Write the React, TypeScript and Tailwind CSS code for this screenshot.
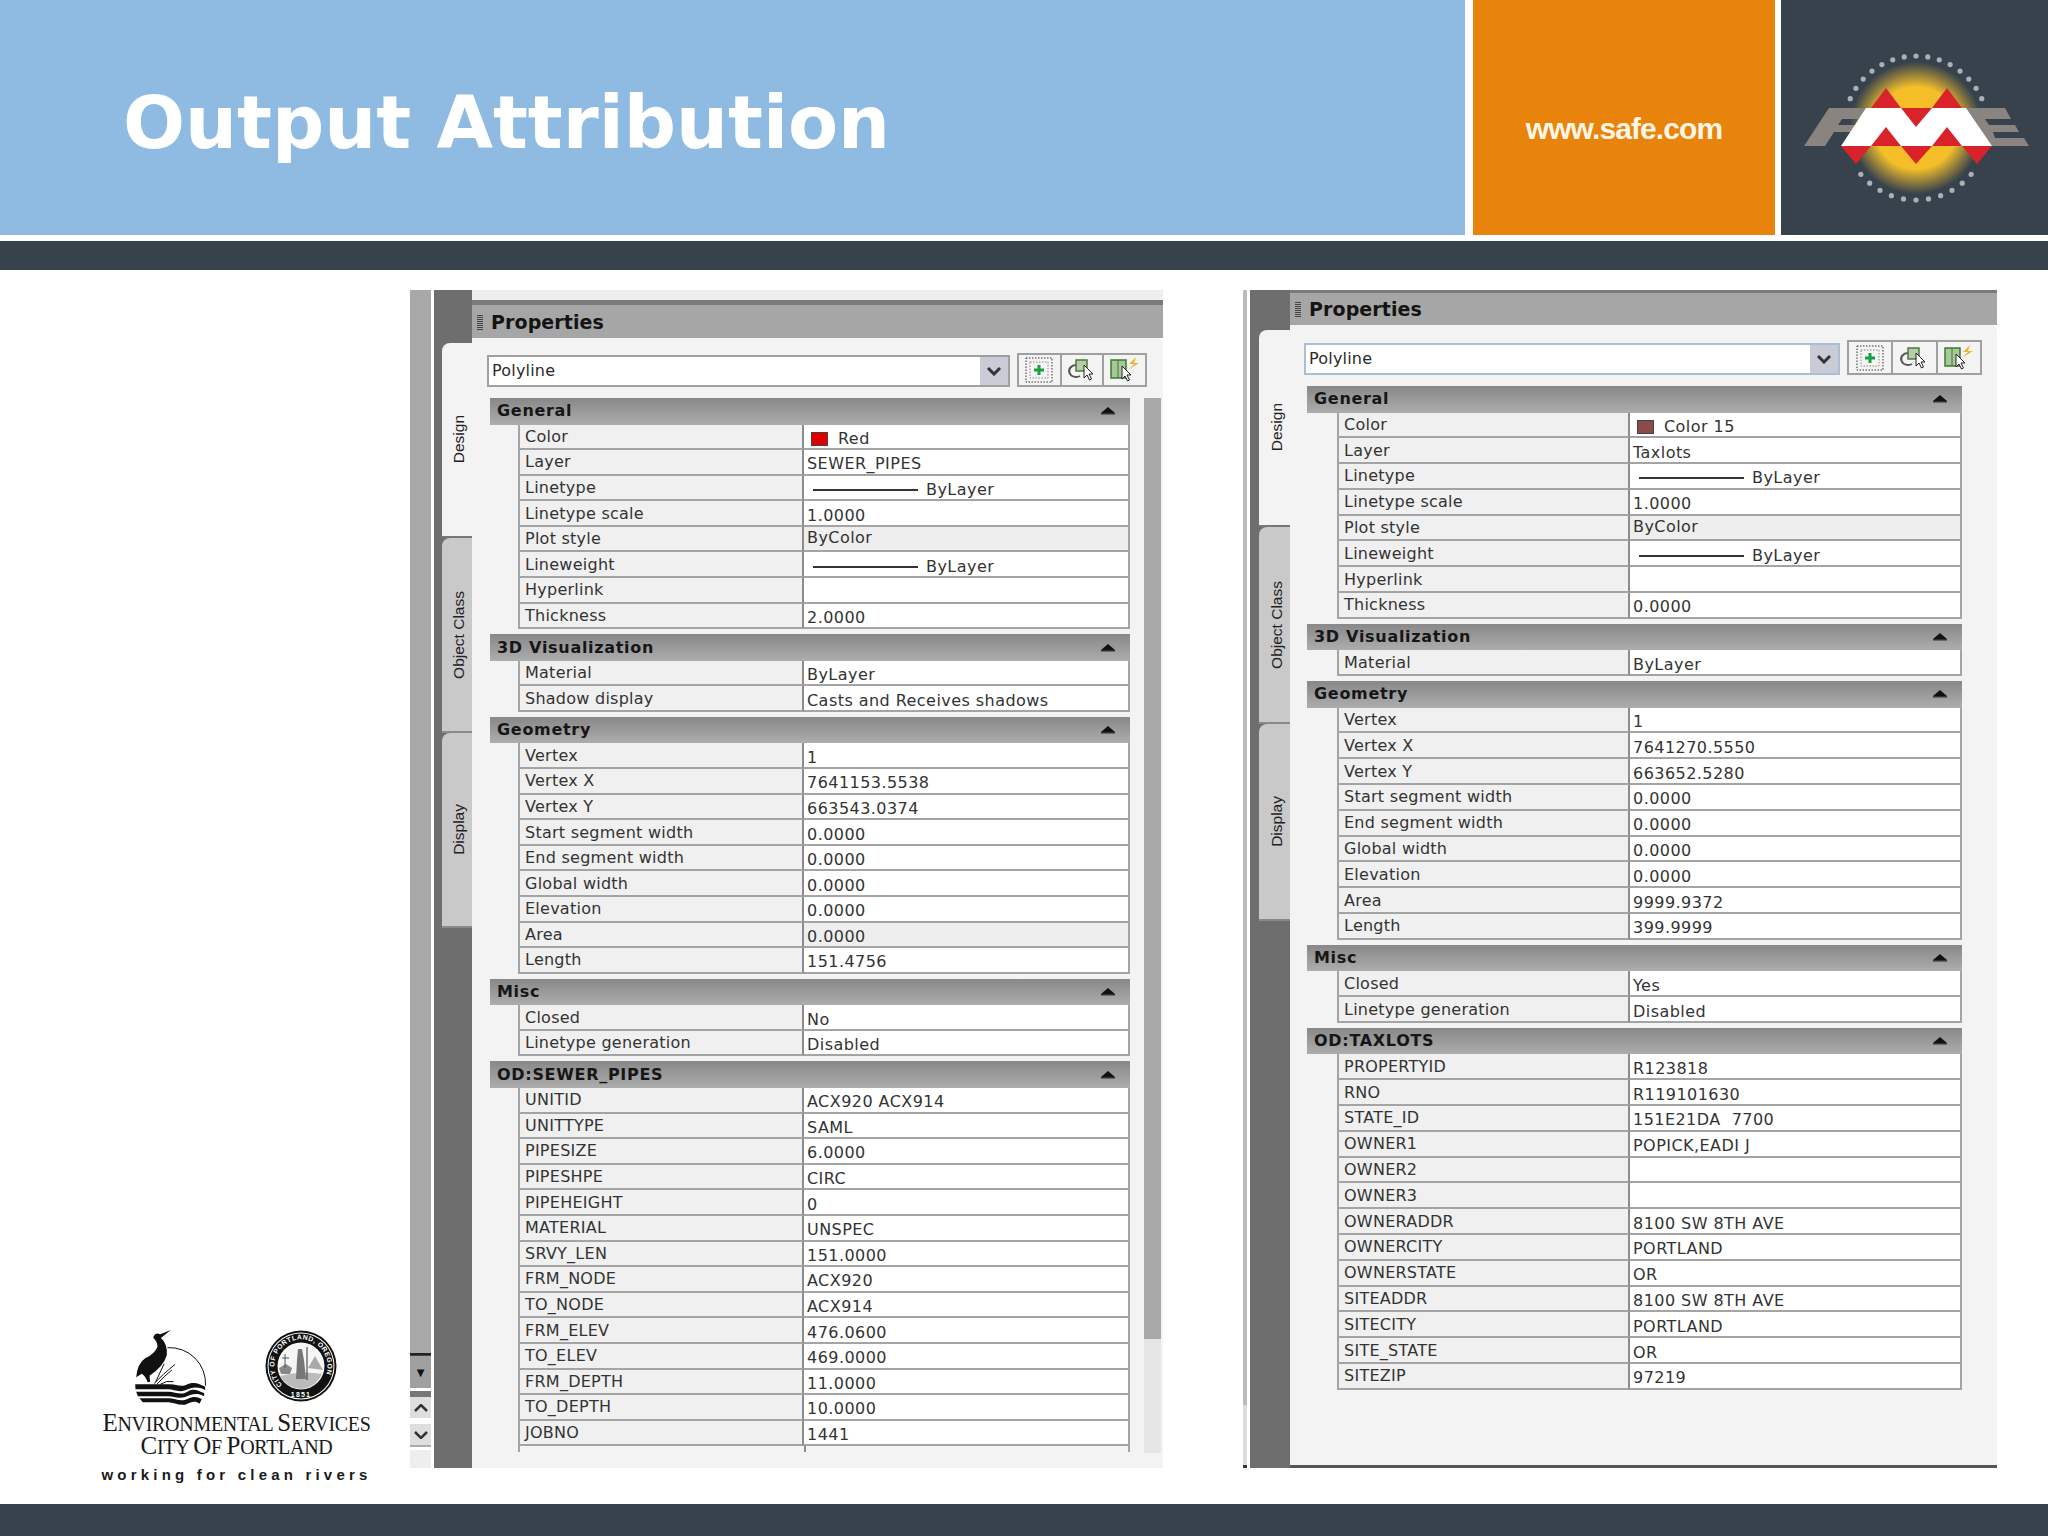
import React from "react";

type Row = {
  label: string;
  value?: string;
  swatch?: string;
  line?: boolean;
  high?: boolean;
  hover?: boolean;
};
type Section = { title: string; rows: Row[] };

const rows = (items: [string, string][]): Row[] =>
  items.map(([label, value]) => ({ label, value }));

const leftSections: Section[] = [
  {
    title: "General",
    rows: [
      { label: "Color", value: "Red", swatch: "bg-[#e00000]" },
      { label: "Layer", value: "SEWER_PIPES" },
      { label: "Linetype", value: "ByLayer", line: true },
      { label: "Linetype scale", value: "1.0000" },
      { label: "Plot style", value: "ByColor", high: true, hover: true },
      { label: "Lineweight", value: "ByLayer", line: true },
      { label: "Hyperlink", value: "" },
      { label: "Thickness", value: "2.0000" },
    ],
  },
  {
    title: "3D Visualization",
    rows: rows([
      ["Material", "ByLayer"],
      ["Shadow display", "Casts and Receives shadows"],
    ]),
  },
  {
    title: "Geometry",
    rows: [
      ...rows([
        ["Vertex", "1"],
        ["Vertex X", "7641153.5538"],
        ["Vertex Y", "663543.0374"],
        ["Start segment width", "0.0000"],
        ["End segment width", "0.0000"],
        ["Global width", "0.0000"],
        ["Elevation", "0.0000"],
      ]),
      { label: "Area", value: "0.0000", hover: true },
      { label: "Length", value: "151.4756" },
    ],
  },
  {
    title: "Misc",
    rows: rows([
      ["Closed", "No"],
      ["Linetype generation", "Disabled"],
    ]),
  },
  {
    title: "OD:SEWER_PIPES",
    rows: rows([
      ["UNITID", "ACX920 ACX914"],
      ["UNITTYPE", "SAML"],
      ["PIPESIZE", "6.0000"],
      ["PIPESHPE", "CIRC"],
      ["PIPEHEIGHT", "0"],
      ["MATERIAL", "UNSPEC"],
      ["SRVY_LEN", "151.0000"],
      ["FRM_NODE", "ACX920"],
      ["TO_NODE", "ACX914"],
      ["FRM_ELEV", "476.0600"],
      ["TO_ELEV", "469.0000"],
      ["FRM_DEPTH", "11.0000"],
      ["TO_DEPTH", "10.0000"],
      ["JOBNO", "1441"],
    ]),
  },
];

const rightSections: Section[] = [
  {
    title: "General",
    rows: [
      { label: "Color", value: "Color 15", swatch: "bg-[#8a4a4a]" },
      { label: "Layer", value: "Taxlots" },
      { label: "Linetype", value: "ByLayer", line: true },
      { label: "Linetype scale", value: "1.0000" },
      { label: "Plot style", value: "ByColor", high: true, hover: true },
      { label: "Lineweight", value: "ByLayer", line: true },
      { label: "Hyperlink", value: "" },
      { label: "Thickness", value: "0.0000" },
    ],
  },
  { title: "3D Visualization", rows: rows([["Material", "ByLayer"]]) },
  {
    title: "Geometry",
    rows: rows([
      ["Vertex", "1"],
      ["Vertex X", "7641270.5550"],
      ["Vertex Y", "663652.5280"],
      ["Start segment width", "0.0000"],
      ["End segment width", "0.0000"],
      ["Global width", "0.0000"],
      ["Elevation", "0.0000"],
      ["Area", "9999.9372"],
      ["Length", "399.9999"],
    ]),
  },
  {
    title: "Misc",
    rows: rows([
      ["Closed", "Yes"],
      ["Linetype generation", "Disabled"],
    ]),
  },
  {
    title: "OD:TAXLOTS",
    rows: rows([
      ["PROPERTYID", "R123818"],
      ["RNO", "R119101630"],
      ["STATE_ID", "151E21DA  7700"],
      ["OWNER1", "POPICK,EADI J"],
      ["OWNER2", ""],
      ["OWNER3", ""],
      ["OWNERADDR", "8100 SW 8TH AVE"],
      ["OWNERCITY", "PORTLAND"],
      ["OWNERSTATE", "OR"],
      ["SITEADDR", "8100 SW 8TH AVE"],
      ["SITECITY", "PORTLAND"],
      ["SITE_STATE", "OR"],
      ["SITEZIP", "97219"],
    ]),
  },
];

const panelStyles = {
  left: {
    root: "w-[753px]",
    rail: "w-[38px] pt-[53px] pl-[8px]",
    tab: "h-[195px] w-[30px]",
    topLight: "h-[10px] bg-[#eeeeee]",
    topDark: "h-[5px]",
    title: "h-[33px] pt-[2px]",
    grip: "mr-[8px]",
    combo: "w-[523px] ml-[15px] border-[#a0a0a0]",
    tools: "w-[130px] h-[34px]",
    sections: "ml-[18px] w-[640px]",
    rowsIndent: "ml-[28px]",
    rowGrid: "grid-cols-[286px_326px] grid-rows-[25.6px]",
  },
  right: {
    root: "w-[754px]",
    rail: "w-[40px] pt-[40px] pl-[9px]",
    tab: "h-[197px] w-[31px]",
    topLight: "h-0",
    topDark: "h-[3px]",
    title: "h-[32px] pt-[1px]",
    grip: "mr-[8px]",
    combo: "w-[536px] ml-[14px] border-[#a9bfd6]",
    tools: "w-[135px] h-[35px]",
    sections: "ml-[17px] w-[655px]",
    rowsIndent: "ml-[30px]",
    rowGrid: "grid-cols-[293px_332px] grid-rows-[25.8px]",
  },
};

function SectionArrow() {
  return (
    <svg width="16" height="8" viewBox="0 0 16 8">
      <path d="M8 0 L15 6 H1 Z" fill="#111" />
      <rect x="1" y="6" width="14" height="1.5" fill="#333" />
    </svg>
  );
}

function PropRow({ row, grid }: { row: Row; grid: string }) {
  return (
    <div className={`grid ${grid} text-[16px] leading-[18px] text-[#333333]`}>
      <div className="flex min-h-0 items-center overflow-hidden border-b-2 border-l-2 border-r-2 border-[#a4a4a4] border-r-[#8c8c8c] bg-[#f0f0f0] pl-[5px] pt-[1px] tracking-[0.25px]">
        {row.label}
      </div>
      <div
        className={`flex min-h-0 items-center gap-[8px] overflow-hidden whitespace-pre border-b-2 border-r-2 border-[#a4a4a4] pl-[3px] tracking-[0.45px] ${
          row.hover ? "bg-[#eeeeee]" : "bg-white"
        } ${row.high ? "pb-[1px]" : "pt-[5px]"}`}
      >
        {row.swatch && (
          <span className={`ml-[4px] mr-[2px] h-[14px] w-[17px] border border-[#444] ${row.swatch}`} />
        )}
        {row.line && <span className="ml-[6px] h-[2px] w-[105px] bg-[#333]" />}
        {row.value}
      </div>
    </div>
  );
}

function SectionBlock({ section, variant }: { section: Section; variant: "left" | "right" }) {
  const st = panelStyles[variant];
  return (
    <div className="mb-[5px]">
      <div className="flex h-[26.5px] items-center justify-between bg-gradient-to-b from-[#888888] to-[#adadad] pl-[7px] pr-[14px] text-[16px] font-bold tracking-[0.7px] text-[#161616]">
        {section.title}
        <SectionArrow />
      </div>
      <div className={st.rowsIndent}>
        {section.rows.map((row) => (
          <PropRow key={row.label} row={row} grid={st.rowGrid} />
        ))}
      </div>
    </div>
  );
}

function Cursor({ x, y }: { x: number; y: number }) {
  return (
    <path
      transform={`translate(${x} ${y})`}
      d="M0 0 V13 L3 10 L5.5 15 L7.5 14 L5 9 H9 Z"
      fill="#fff"
      stroke="#222"
      strokeWidth="1"
    />
  );
}

function ToolButtons({ className }: { className: string }) {
  return (
    <div className={`ml-[7px] flex divide-x-2 divide-[#a0a0a0] border-2 border-[#a0a0a0] bg-[#f4f4f4] ${className}`}>
      <div className="flex flex-1 items-center justify-center">
        <svg width="28" height="26" viewBox="0 0 28 26">
          <rect x="1" y="1" width="26" height="24" fill="none" stroke="#333" strokeDasharray="1.5 1.5" />
          <rect x="5" y="5" width="18" height="16" fill="none" stroke="#888" strokeDasharray="1.5 1.5" />
          <path d="M14 8 V18 M9 13 H19" stroke="#18a040" strokeWidth="3" />
        </svg>
      </div>
      <div className="flex flex-1 items-center justify-center">
        <svg width="30" height="28" viewBox="0 0 30 28">
          <path d="M9 9 A7 6 0 1 0 13 20" fill="none" stroke="#555" strokeWidth="2" />
          <rect x="9" y="4" width="11" height="11" fill="#b5cda8" stroke="#4a7a3a" strokeWidth="1.5" />
          <Cursor x={17} y={9} />
        </svg>
      </div>
      <div className="flex flex-1 items-center justify-center">
        <svg width="32" height="28" viewBox="0 0 32 28">
          <rect x="2" y="4" width="15" height="18" fill="#a9c79a" stroke="#3c7a2c" strokeWidth="1.5" />
          <path d="M9 4 V22" stroke="#3c7a2c" />
          <path d="M27 1 L20 8 H25 L19 14 L30 7 H25 Z" fill="#eeb53a" />
          <Cursor x={13} y={10} />
        </svg>
      </div>
    </div>
  );
}

function Tab({ label, active, size }: { label: string; active?: boolean; size: string }) {
  return (
    <div
      className={`flex items-center justify-center rounded-tl-[8px] border-b-2 pl-[4px] text-[15.5px] ${size} ${
        active ? "border-[#777] bg-[#f3f3f3]" : "border-[#8a8a8a] bg-[#c9c9c9]"
      } [font-family:'Liberation_Sans',sans-serif] text-[#222]`}
    >
      <span className="rotate-180 [writing-mode:vertical-rl]">{label}</span>
    </div>
  );
}

function ScrollChevron({ up }: { up?: boolean }) {
  return (
    <svg width="14" height="8" viewBox="0 0 14 8">
      <path d={up ? "M1 7 L7 1 L13 7" : "M1 1 L7 7 L13 1"} fill="none" stroke="#333" strokeWidth="2.5" />
    </svg>
  );
}

function PropertiesPanel({ variant, sections }: { variant: "left" | "right"; sections: Section[] }) {
  const st = panelStyles[variant];
  const isLeft = variant === "left";
  return (
    <div className={`flex shrink-0 self-start ${st.root} h-[1178px]`}>
      {isLeft ? (
        <div className="flex w-[21px] flex-col bg-white">
          <div className="flex-1 bg-[#a8a8a8]" />
          <div className="h-[2px] bg-[#222]" />
          <div className="flex h-[33px] items-center justify-center border-t border-[#444] bg-[#a0a0a0] text-[10px] text-[#111]">
            ▼
          </div>
          <div className="mt-[3px] h-[6px] bg-[#777]" />
          <div className="flex h-[21px] items-center justify-center bg-[#dedede]">
            <ScrollChevron up />
          </div>
          <div className="mt-[6px] flex h-[23px] items-center justify-center border-b-2 border-[#aaa] bg-[#dedede]">
            <ScrollChevron />
          </div>
          <div className="mt-[3px] h-[18px] bg-[#eeeeee]" />
        </div>
      ) : (
        <div className="flex w-[4px] flex-col bg-[#bbbbbb]">
          <div className="flex-1" />
          <div className="h-[60px] bg-[#dddddd]" />
          <div className="h-[3px] bg-[#333]" />
        </div>
      )}
      <div className="w-[3px] bg-white" />
      <div className={`flex shrink-0 flex-col bg-[#6e6e6e] ${st.rail}`}>
        <Tab label="Design" active size={st.tab} />
        <Tab label="Object Class" size={st.tab} />
        <Tab label="Display" size={st.tab} />
      </div>
      <div className="flex flex-1 flex-col">
        <div className={st.topLight} />
        <div className={`${st.topDark} bg-[#7a7a7a]`} />
        <div className={`flex items-center bg-[#a6a6a6] ${st.title}`}>
          <div className={`ml-[5px] h-[16px] w-[6px] bg-[repeating-linear-gradient(to_bottom,#444_0,#444_1px,transparent_1px,transparent_2px)] ${st.grip}`} />
          <span className="text-[19px] font-bold tracking-[0.1px] text-[#141414]">Properties</span>
        </div>
        <div className="flex flex-1 flex-col rounded-tr-[6px] bg-[#f3f3f3] pt-[15px]">
          <div className="mb-[11px] flex">
            <div className={`flex h-[32px] items-stretch justify-between self-end border-2 bg-white text-[16px] tracking-[0.2px] text-[#2b2b2b] ${st.combo}`}>
              <span className="flex items-center pl-[3px]">Polyline</span>
              <div className="flex w-[28px] items-center justify-center bg-[#c9ccd6]">
                <svg width="16" height="10" viewBox="0 0 16 10">
                  <path d="M2 2 L8 8 L14 2" fill="none" stroke="#333" strokeWidth="3" />
                </svg>
              </div>
            </div>
            <ToolButtons className={st.tools} />
          </div>
          <div className="flex flex-1">
            <div className={st.sections}>
              {sections.map((s) => (
                <SectionBlock key={s.title} section={s} variant={variant} />
              ))}
              {isLeft && (
                <div className="-mt-[5px] ml-[28px] h-[6px] w-[612px] border-x-2 border-[#a4a4a4] bg-[linear-gradient(to_right,transparent_284px,#8c8c8c_284px,#8c8c8c_286px,transparent_286px)]" />
              )}
            </div>
            {isLeft && (
              <div className="ml-[14px] flex h-[1055px] w-[17px] flex-col bg-[#e6e6e6]">
                <div className="h-[941px] bg-[#a8a8a8]" />
              </div>
            )}
          </div>
        </div>
        {!isLeft && <div className="h-[3px] bg-[#555]" />}
      </div>
    </div>
  );
}

function FmeLogo() {
  const cx = 1916;
  const cy = 128;
  const r = 72;
  const top = Array.from({ length: 15 }, (_, i) => -66 + i * (132 / 14));
  const bottom = Array.from({ length: 11 }, (_, i) => 180 - 50 + i * 10);
  const dots = [...top, ...bottom].map((deg) => {
    const a = (deg * Math.PI) / 180;
    return { x: cx + r * Math.sin(a), y: cy - r * Math.cos(a) };
  });
  return (
    <svg width="232" height="160" viewBox="1800 50 232 160">
      <defs>
        <radialGradient id="fmeGlow">
          <stop offset="0%" stopColor="#f7bd23" />
          <stop offset="62%" stopColor="#f5bf2a" />
          <stop offset="100%" stopColor="#37424d" />
        </radialGradient>
      </defs>
      <circle cx={cx} cy={cy} r="66" fill="url(#fmeGlow)" />
      {dots.map((d, i) => (
        <circle key={i} cx={d.x} cy={d.y} r="2.6" fill="#a9b1b7" />
      ))}
      <path d="M1804 146 L1829 108 H1872 L1864 119 H1842 L1838 125 H1858 L1854 132 H1834 L1825 146 Z" fill="#8a8480" />
      <path d="M1962 108 H2005 L2011 119 H1985 L1989 125 H2015 L2019 132 H1993 L1995 138 H2024 L2029 146 H1960 Z" fill="#8a8480" />
      <path d="M1841 146 L1866 108 H1966 L1992 146 Z" fill="#fff" />
      <path d="M1871 108 L1886 88 L1901 108 Z M1932 108 L1947 88 L1962 108 Z" fill="#d8232a" />
      <path d="M1901 108 H1932 L1916 127 Z" fill="#d8232a" />
      <path d="M1871 146 L1886 127 L1901 146 Z M1932 146 L1947 127 L1962 146 Z" fill="#d8232a" />
      <path d="M1841 146 H1871 L1856 164 Z M1901 146 H1932 L1916 164 Z M1962 146 H1992 L1977 164 Z" fill="#d8232a" />
    </svg>
  );
}

function HeronMark() {
  return (
    <svg width="71" height="75" viewBox="225 95 212 225">
      <path d="M322 148 A108 108 0 0 1 436 262" fill="none" stroke="#111" strokeWidth="3" />
      <path
        d="M332 95 L300 108 Q285 100 279 118 Q292 130 292 145 Q285 165 255 180 Q232 195 228 237 L245 226 Q258 235 262 252 L270 250 L268 232 Q310 205 320 170 Q322 135 302 119 Z"
        fill="#111"
      />
      <path
        d="M282 256 Q305 230 345 198 M290 258 Q310 235 335 215 M300 258 Q320 245 340 250 M286 252 L312 196"
        fill="none"
        stroke="#111"
        strokeWidth="3"
      />
      <path d="M225 258 H330 C350 258 362 268 382 258 S420 258 435 265 V275 C410 262 395 268 375 276 C355 283 340 273 325 273 H226 Z" fill="#111" />
      <path d="M228 280 H325 C345 280 362 292 382 280 S415 278 432 285 V294 C410 282 395 288 375 296 C355 302 340 294 325 294 H233 Z" fill="#111" />
      <path d="M238 300 H325 C345 300 362 312 382 302 S410 296 425 302 L418 316 C405 306 395 310 375 319 C355 322 340 312 325 312 H248 Z" fill="#111" />
    </svg>
  );
}

function CitySeal() {
  return (
    <svg width="72" height="72" viewBox="0 0 72 72">
      <defs>
        <path id="sealRing" d="M17.3 54.7 A26.5 26.5 0 1 1 54.7 54.7" />
      </defs>
      <circle cx="36" cy="36" r="35.5" fill="#111" />
      <circle cx="36" cy="36" r="33.5" fill="#fff" />
      <circle cx="36" cy="36" r="32.5" fill="#111" />
      <circle cx="36" cy="36" r="23.5" fill="#f6f6f6" />
      <path d="M14 38 L21 34 L27 38 L25 44 H16 Z" fill="#888" />
      <path d="M20 24 V38 M17 28 H24" stroke="#555" strokeWidth="1" />
      <path d="M43 38 L50 26 L58 40 Z" fill="#aaa" />
      <path d="M15 46 Q36 40 57 44 Q50 58 36 59 Q22 58 15 46 Z" fill="#bbb" />
      <path d="M33 19 H37 L39 30 L41 49 H31 L32 30 Z" fill="#777" />
      <path d="M42 17 V50" stroke="#333" strokeWidth="1" />
      <text fontSize="6.8" fill="#fff" fontWeight="700" letterSpacing="0.5" fontFamily="'Liberation Sans', sans-serif">
        <textPath href="#sealRing">CITY OF PORTLAND, OREGON</textPath>
      </text>
      <text x="36" y="67" textAnchor="middle" fontSize="7" fill="#fff" fontWeight="700" letterSpacing="1.2" fontFamily="'Liberation Sans', sans-serif">
        1851
      </text>
    </svg>
  );
}

function SmallCapsLine({ parts }: { parts: [string, string][] }) {
  return (
    <div className="whitespace-pre text-[20px] leading-[21px] tracking-[-0.3px] text-[#1a1a1a] [font-family:'Liberation_Serif',serif]">
      {parts.map(([big, rest], i) => (
        <React.Fragment key={i}>
          <span className="text-[25px]">{big}</span>
          {rest}
          {i < parts.length - 1 ? " " : ""}
        </React.Fragment>
      ))}
    </div>
  );
}

export default function App() {
  return (
    <div className="flex h-[1536px] w-[2048px] flex-col overflow-hidden bg-white [font-family:'DejaVu_Sans',sans-serif]">
      <header className="flex h-[235px] shrink-0">
        <div className="flex w-[1465px] items-center bg-[#8fbbe2] pl-[123px] pt-[10px]">
          <h1 className="text-[73px] font-bold leading-none text-white">Output Attribution</h1>
        </div>
        <div className="ml-[8px] flex w-[302px] items-center justify-center bg-[#e8830c] pt-[22px] text-[30px] font-bold tracking-[-0.9px] text-[#fff6e6] [font-family:'Liberation_Sans',sans-serif]">
          www.safe.com
        </div>
        <div className="ml-[6px] flex flex-1 items-center justify-center bg-[#37424d] pl-[3px] pt-[25px]">
          <FmeLogo />
        </div>
      </header>
      <div className="mt-[6px] h-[29px] shrink-0 bg-[#37424d]" />

      <main className="flex flex-1 pt-[20px]">
        <div className="flex w-[410px] shrink-0 flex-col justify-end pb-[20px] pl-[103px]">
          <div className="flex w-[267px] flex-col items-center">
            <div className="flex w-full gap-[59px] pl-[32px]">
              <HeronMark />
              <CitySeal />
            </div>
            <div className="mt-[7px]">
              <SmallCapsLine parts={[["E", "NVIRONMENTAL"], ["S", "ERVICES"]]} />
            </div>
            <SmallCapsLine parts={[["C", "ITY"], ["O", "F"], ["P", "ORTLAND"]]} />
            <div className="mt-[8px] whitespace-nowrap text-[15px] font-bold leading-[18px] tracking-[4.2px] text-[#1a1a1a] [font-family:'Liberation_Sans',sans-serif]">
              working for clean rivers
            </div>
          </div>
        </div>
        <PropertiesPanel variant="left" sections={leftSections} />
        <div className="w-[80px] shrink-0" />
        <PropertiesPanel variant="right" sections={rightSections} />
      </main>

      <footer className="h-[32px] shrink-0 bg-[#37424d]" />
    </div>
  );
}
